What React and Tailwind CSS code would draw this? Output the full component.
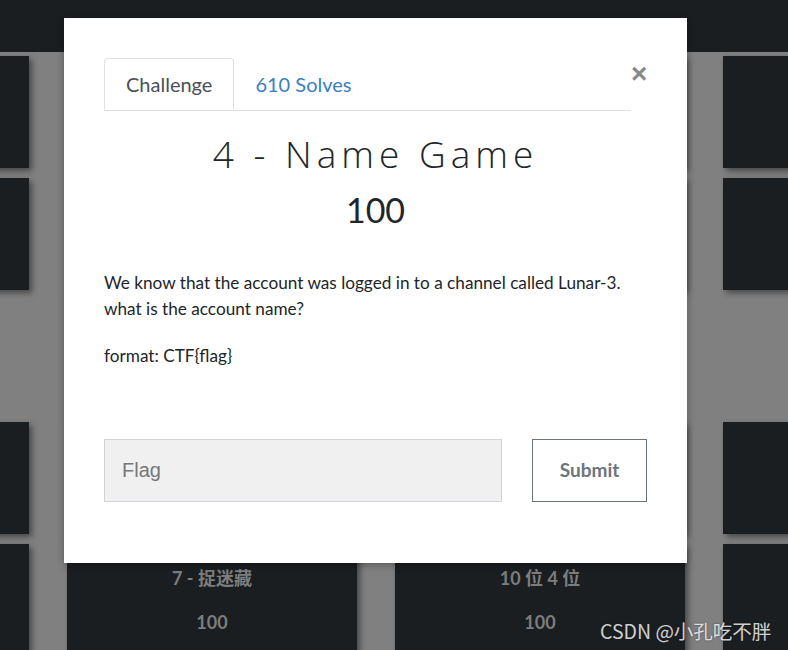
import { useState } from 'react';

const LATO = { fontFamily: 'Lato, "Noto Sans CJK SC", sans-serif' };

const ROWS = [
  [null, null, null, null],
  [null, null, null, null],
  'gap',
  [null, null, null, null],
  [null, { name: '7 - 捉迷藏', value: 100 }, { name: '10 位 4 位', value: 100 }, null],
];

function Card({ item }) {
  return (
    <div className="h-[112px] bg-[#1b1e21] shadow-[3px_3px_6px_rgba(0,0,0,0.45)] flex flex-col items-center text-[#7d7d7d] font-bold text-[18px]">
      {item && (
        <>
          <div className="mt-[22px] leading-[24px]">{item.name}</div>
          <div className="mt-[20px] leading-[24px]">{item.value}</div>
        </>
      )}
    </div>
  );
}

export default function App() {
  const [flag, setFlag] = useState('');

  return (
    <div className="relative w-[788px] h-[650px] overflow-hidden bg-[#808080]" style={LATO}>
      {/* Navbar (dimmed) */}
      <div className="h-[52px] bg-[#1b1e21]" />

      {/* Challenge board */}
      <div className="ml-[-261px] mt-[4px] flex flex-col gap-[10px]">
        {ROWS.map((row, r) =>
          row === 'gap' ? (
            <div key={r} className="h-[112px]" />
          ) : (
            <div key={r} className="flex gap-[38px]">
              {row.map((item, c) => (
                <div key={c} className="w-[290px] shrink-0">
                  <Card item={item} />
                </div>
              ))}
            </div>
          )
        )}
      </div>

      {/* Modal */}
      <div className="absolute left-[64px] top-[18px] w-[623px] h-[545px] bg-white shadow-[0_2px_8px_rgba(0,0,0,0.3)] pl-[40px] pr-[40px] pt-[40px]">
        <div className="flex items-start">
          <div className="flex-1 flex border-b border-[#dee2e6]">
            <div className="h-[52px] px-[21px] flex items-center border border-[#dee2e6] border-b-white rounded-t-[4px] -mb-px text-[20px] text-[#495057] bg-white">
              Challenge
            </div>
            <div className="h-[52px] px-[21px] flex items-center text-[20px] text-[#3a7fc1]">
              610 Solves
            </div>
          </div>
          <button className="w-[16px] mt-[4px] text-[28px] leading-[24px] font-bold text-[#888] text-right" style={{ fontFamily: '"Liberation Sans", sans-serif' }}>
            ×
          </button>
        </div>

        <h2
          className="mt-[20px] text-center text-[37px] leading-[46px] font-light tracking-[5px] text-[#212529]"
          style={{ fontFamily: '"Open Sans", Lato, sans-serif' }}
        >
          4 - Name Game
        </h2>
        <div className="mt-[13px] text-center text-[34px] leading-[40px] text-[#212529]">100</div>

        <div className="mt-[40px] text-[17.2px] leading-[26px] text-[#212529]">
          <p>We know that the account was logged in to a channel called Lunar-3. what is the account name?</p>
          <p className="mt-[21px]">format: CTF&#123;flag&#125;</p>
        </div>

        <div className="mt-[70px] flex gap-[30px]">
          <input
            value={flag}
            onChange={(e) => setFlag(e.target.value)}
            placeholder="Flag"
            className="w-[398px] h-[63px] bg-[#f0f0f0] border border-[#ced4da] px-[17px] text-[20px] text-[#495057] placeholder:text-[#75777a] outline-none"
            style={{ fontFamily: '"Liberation Sans", Arial, sans-serif' }}
          />
          <button className="w-[115px] h-[63px] border border-[#6c757d] text-[19px] font-bold text-[#6c757d] bg-white">
            Submit
          </button>
        </div>
      </div>

      {/* Watermark */}
      <div
        className="absolute left-[600px] top-[617px] text-[19.5px] leading-[28px] text-white/80 [text-shadow:0_0_2px_rgba(0,0,0,0.5)]"
        style={{ fontFamily: '"Noto Sans CJK SC", sans-serif' }}
      >
        CSDN @小孔吃不胖
      </div>
    </div>
  );
}
